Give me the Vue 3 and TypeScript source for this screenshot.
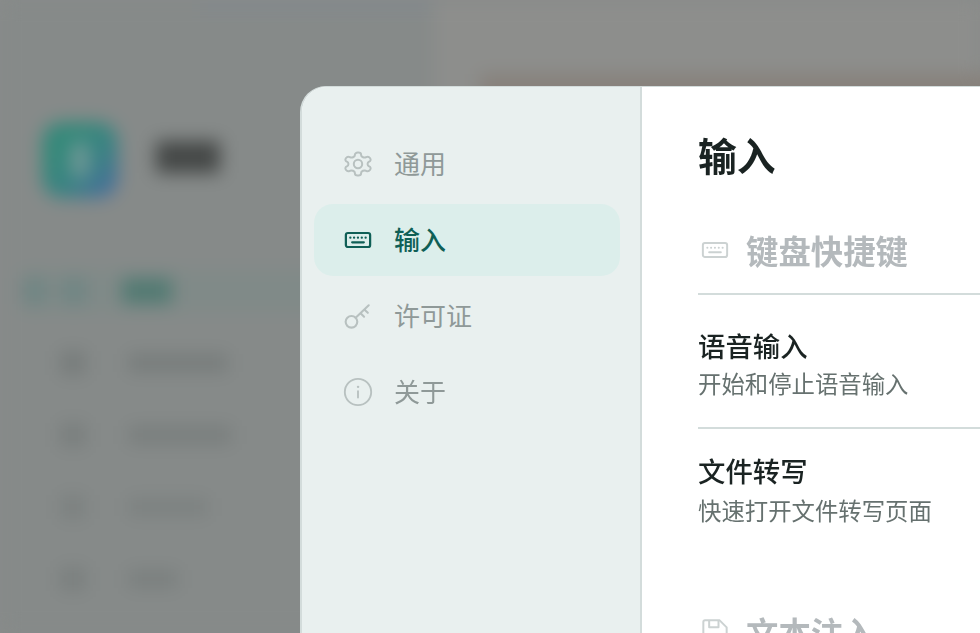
<script setup lang="ts">
const blurRows = [
  { id: 1, width: 100, tone: '#777c7b' },
  { id: 2, width: 104, tone: '#797e7d' },
  { id: 3, width: 80, tone: '#7c8180' },
  { id: 4, width: 50, tone: '#7a7f7e' },
]
</script>

<template>
  <div class="page">
    <div class="backdrop" aria-hidden="true">
      <aside class="bg-side">
        <div class="bg-strip"></div>
        <div class="bg-brand">
          <div class="bg-logo"><span class="bg-logo-mark"></span></div>
          <div class="bg-name"></div>
        </div>
        <div class="bg-tabs">
          <span class="bg-tab"></span>
          <span class="bg-tab"></span>
          <span class="bg-tab bg-tab-on"></span>
        </div>
        <div class="bg-list">
          <div v-for="row in blurRows" :key="row.id" class="bg-row">
            <span class="bg-ico" :style="{ background: row.tone }"></span>
            <span class="bg-line" :style="{ width: row.width + 'px', background: row.tone }"></span>
          </div>
        </div>
      </aside>
      <main class="bg-main">
        <div class="bg-card"></div>
      </main>
    </div>

    <section class="dialog">
      <nav class="nav">
        <a class="nav-item">
          <svg class="nav-ico" viewBox="2 -0.150 20 24.300" preserveAspectRatio="none" fill="none" stroke="currentColor">
            <path vector-effect="non-scaling-stroke" stroke-width="2" d="M12.220 2h-.44a2 2 0 0 0-2 2v.18a2 2 0 0 1-1 1.730l-.43.25a2 2 0 0 1-2 0l-.15-.08a2 2 0 0 0-2.730.73l-.22.38a2 2 0 0 0 .73 2.730l.15.1a2 2 0 0 1 1 1.720v.51a2 2 0 0 1-1 1.740l-.15.09a2 2 0 0 0-.73 2.730l.22.38a2 2 0 0 0 2.730.73l.15-.08a2 2 0 0 1 2 0l.43.25a2 2 0 0 1 1 1.730V20a2 2 0 0 0 2 2h.44a2 2 0 0 0 2-2v-.18a2 2 0 0 1 1-1.730l.43-.25a2 2 0 0 1 2 0l.15.08a2 2 0 0 0 2.730-.73l.22-.39a2 2 0 0 0-.73-2.730l-.15-.08a2 2 0 0 1-1-1.740v-.5a2 2 0 0 1 1-1.740l.15-.09a2 2 0 0 0 .73-2.730l-.22-.38a2 2 0 0 0-2.730-.73l-.15.08a2 2 0 0 1-2 0l-.43-.25a2 2 0 0 1-1-1.730V4a2 2 0 0 0-2-2z" />
            <ellipse vector-effect="non-scaling-stroke" stroke-width="2" cx="12" cy="12" rx="3" ry="3.600" />
          </svg>
          <span class="nav-label">通用</span>
        </a>
        <a class="nav-item active">
          <svg class="nav-ico" viewBox="0 0 24 24" fill="none" stroke="currentColor" stroke-width="1.9" stroke-linecap="round">
            <rect x="1.600" y="6" width="20.800" height="12" rx="1.800" />
            <path d="M5.400 10h.1M8.600 10h.1M11.900 10h.1M15.200 10h.1M18.500 10h.1M7 14h10" />
          </svg>
          <span class="nav-label">输入</span>
        </a>
        <a class="nav-item">
          <svg class="nav-ico" viewBox="0 0 24 24" fill="none" stroke="currentColor" stroke-width="1.800" stroke-linecap="round">
            <circle cx="6.400" cy="17" r="5" />
            <path d="M10 13.500 21.200 2.800M14.200 9.600l3 3M17.400 6.500l3 2.800" />
          </svg>
          <span class="nav-label">许可证</span>
        </a>
        <a class="nav-item">
          <svg class="nav-ico nav-ico-round" viewBox="0 0 24 24" fill="none" stroke="currentColor" stroke-width="1.600" stroke-linecap="round">
            <circle cx="12" cy="12" r="11.300" />
            <path d="M12 11.200v5.600" />
            <path d="M12 7.600h.1" stroke-width="2" />
          </svg>
          <span class="nav-label">关于</span>
        </a>
      </nav>

      <div class="content">
        <h1 class="title">输入</h1>

        <header class="section-head">
          <svg class="section-ico" viewBox="0 0 24 24" fill="none" stroke="currentColor" stroke-width="1.700" stroke-linecap="round">
            <rect x="1.600" y="6" width="20.800" height="12" rx="1.800" />
            <path d="M5.400 10h.1M8.600 10h.1M11.900 10h.1M15.200 10h.1M18.500 10h.1M7 14h10" />
          </svg>
          <h2>键盘快捷键</h2>
        </header>

        <div class="row">
          <h3>语音输入</h3>
          <p>开始和停止语音输入</p>
        </div>
        <div class="row row-last">
          <h3>文件转写</h3>
          <p>快速打开文件转写页面</p>
        </div>

        <header class="section-head section-next">
          <svg class="section-ico" viewBox="0 0 24 24" fill="none" stroke="currentColor" stroke-width="1.700" stroke-linejoin="round">
            <path d="M2 3.500A1.500 1.500 0 0 1 3.500 2H16l6 6v12.500a1.500 1.500 0 0 1-1.500 1.500h-17A1.500 1.500 0 0 1 2 20.500z" />
            <path d="M7 2v6h8V2M7 22v-8h10v8" />
          </svg>
          <h2>文本注入</h2>
        </header>
      </div>
    </section>
  </div>
</template>

<style scoped>
.page {
  position: relative;
  width: 980px;
  height: 633px;
  overflow: hidden;
  background: #888b8a;
  font-family: "Noto Sans CJK SC", "Noto Sans", sans-serif;
}

.backdrop {
  display: flex;
  width: 100%;
  height: 100%;
  filter: blur(9px);
}

.bg-side {
  width: 434px;
  flex: none;
  box-sizing: border-box;
  background: #868a89;
}

.bg-strip {
  width: 230px;
  height: 14px;
  margin-left: 200px;
  background: #83898c;
}

.bg-brand {
  display: flex;
  align-items: center;
  gap: 38px;
  margin: 108px 0 0 42px;
}

.bg-logo {
  display: flex;
  align-items: center;
  justify-content: center;
  width: 76px;
  height: 76px;
  border-radius: 20px;
  background: linear-gradient(135deg, #35897a 30%, #3a8283 60%, #466e9c 90%);
}

.bg-logo-mark {
  width: 18px;
  height: 36px;
  border-radius: 8px;
  background: #6f9896;
}

.bg-name {
  width: 64px;
  height: 32px;
  background: #454847;
  margin-bottom: 6px;
}

.bg-tabs {
  display: flex;
  gap: 16px;
  align-items: center;
  margin-top: 72px;
  margin-left: 22px;
  padding: 8px 0;
  width: 340px;
  background: #808a88;
}

.bg-tab {
  width: 24px;
  height: 26px;
  background: #6f8583;
}

.bg-tab-on {
  width: 50px;
  margin-left: 20px;
  background: #527a72;
}

.bg-list {
  display: flex;
  flex-direction: column;
  gap: 46px;
  margin: 38px 0 0 60px;
}

.bg-row {
  display: flex;
  align-items: center;
  gap: 42px;
  height: 26px;
}

.bg-ico {
  width: 26px;
  height: 24px;
}

.bg-line {
  height: 18px;
}

.bg-main {
  flex: 1;
  padding: 74px 0 0 46px;
  background: #8d8e8c;
}

.bg-card {
  height: 200px;
  margin-right: -40px;
  background: #87817b;
}

.dialog {
  position: absolute;
  left: 300px;
  top: 86px;
  display: flex;
  width: 820px;
  height: 640px;
  box-sizing: border-box;
  border: 1px solid #d3dcdb;
  border-left-width: 2px;
  border-radius: 26px;
  overflow: hidden;
  background: #ffffff;
  filter: blur(0.3px);
}

.nav {
  display: flex;
  flex-direction: column;
  gap: 4px;
  width: 340px;
  flex: none;
  box-sizing: border-box;
  padding: 41px 20px 0 12px;
  background: #e9f0ef;
  border-right: 2px solid #d3dcdb;
}

.nav-item {
  display: flex;
  align-items: center;
  gap: 22px;
  height: 72px;
  padding-left: 30px;
  border-radius: 19px;
  color: #8f9998;
  font-size: 26px;
  line-height: 1;
}

.nav-label {
  margin-bottom: 2px;
}

.nav-ico {
  width: 28px;
  height: 28px;
  flex: none;
  color: #b8c1c0;
  overflow: visible;
}

.nav-item.active {
  background: #dceeeb;
  color: #0f5f56;
  font-weight: 500;
}

.nav-item.active .nav-ico {
  color: #0f5f56;
}

.content {
  flex: 1;
  min-width: 0;
  padding: 38px 0 0 56px;
}

.title {
  margin: 0;
  color: #1a2322;
  font-size: 38.800px;
  line-height: 58px;
  font-weight: 700;
}

.section-head {
  display: flex;
  align-items: center;
  gap: 17px;
  height: 86px;
  margin-top: 24px;
  padding-left: 3px;
  color: #b4b9bc;
}

.section-ico {
  width: 28px;
  height: 28px;
  flex: none;
  color: #ccd2d2;
}

.section-head h2 {
  margin: 0;
  font-size: 32.400px;
  line-height: 1;
  font-weight: 700;
}

.row {
  height: 134px;
  box-sizing: border-box;
  padding-top: 30px;
  border-top: 2px solid #d3dcdb;
}

.row h3 {
  margin: 0;
  color: #1a2322;
  font-size: 27.400px;
  line-height: 40px;
  font-weight: 500;
}

.row p {
  margin: 0;
  color: #66716f;
  font-size: 23.400px;
  line-height: 36px;
}

.row-last {
  padding-top: 21px;
}

.row-last p {
  margin-top: 2px;
}

.section-next {
  margin-top: 28px;
}
</style>
